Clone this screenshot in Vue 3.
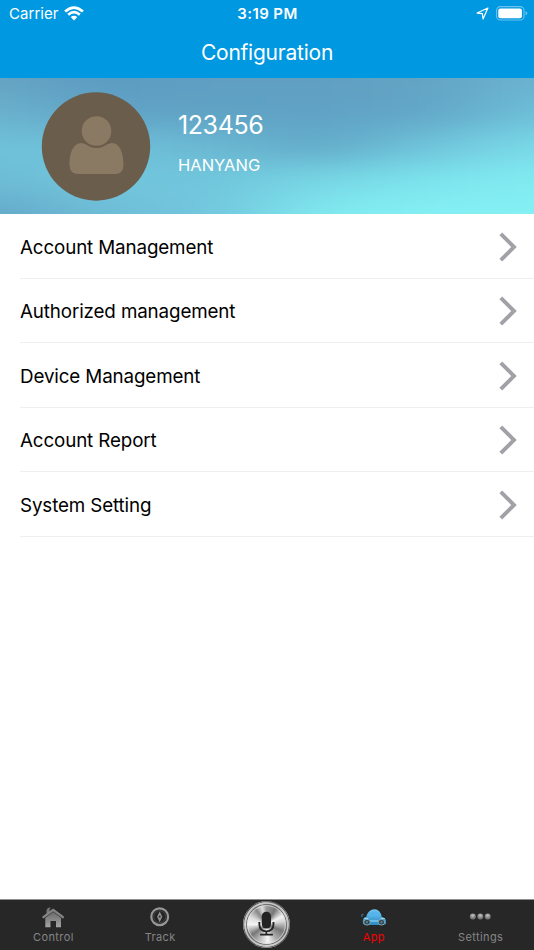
<script setup>
const rows = [
  'Account Management',
  'Authorized management',
  'Device Management',
  'Account Report',
  'System Setting',
]

const sky = [
  ['#65a3c2', '#5c9bc2', '#609fc2', '#609fc2', '#63a4c3', '#6bb2d1'],
  ['#6ab2ce', '#61a2c5', '#5fa2c4', '#60a2c5', '#62a5c7', '#6dbfd8'],
  ['#6fc1da', '#6fc1da', '#6bb8d3', '#62a9c8', '#6fc4da', '#7adae8'],
  ['#6dbcd6', '#72c6dc', '#70c6dc', '#78d7e4', '#7ce4ed', '#81ebf1'],
  ['#64a8c9', '#6fbdd7', '#72c7dd', '#81eaf0', '#84f0f4', '#84f0f4'],
]

const skyCells = sky.flatMap((colors, r) => colors.map((fill, c) => {
  const left = c === 0 ? -200 : c * 106.8 - 53.4
  const right = c === 5 ? 734 : c * 106.8 + 54.4
  const top = r === 0 ? -100 : r * 34 - 17
  const bottom = r === 4 ? 236 : r * 34 + 18
  return { x: left, y: top, width: right - left, height: bottom - top, fill }
}))
</script>

<template>
  <div class="screen">
    <header class="top">
      <div class="status">
        <div class="carrier">
          <span>Carrier</span>
          <svg class="wifi" viewBox="0 0 20 15" width="20" height="15">
            <g fill="none" stroke="#fff" stroke-width="2.7">
              <path d="M1.1 5.5 Q10 -2.4 18.9 5.5" />
              <path d="M4.2 8.7 Q10 3.5 15.8 8.7" />
            </g>
            <path d="M6.7 11.1 Q10 8.4 13.3 11.1 L10 14.4Z" fill="#fff" />
          </svg>
        </div>
        <div class="time">3:19 PM</div>
        <div class="indicators">
          <svg viewBox="0 0 12 12" width="13" height="13">
            <path d="M11 1 L1 5.6 L5.9 6.1 L6.5 11Z" fill="none" stroke="#fff" stroke-width="1.1" stroke-linejoin="round" />
          </svg>
          <svg class="battery" viewBox="0 0 32 15" width="32" height="15">
            <rect x=".6" y=".6" width="27.4" height="13.4" rx="3.8" fill="none" stroke="#fff" stroke-opacity=".42" stroke-width="1.1" />
            <rect x="2.3" y="2.4" width="23.6" height="9.8" rx="2" fill="#fff" />
            <path d="M29.6 5 Q31.2 5.8 31.2 7.3 Q31.2 8.8 29.6 9.6Z" fill="#fff" fill-opacity=".45" />
          </svg>
        </div>
      </div>
      <h1 class="title">Configuration</h1>
    </header>

    <section class="profile">
      <svg class="backdrop" viewBox="0 0 534 136" preserveAspectRatio="none">
        <defs>
          <filter id="soft" filterUnits="userSpaceOnUse" x="-200" y="-100" width="934" height="336" color-interpolation-filters="sRGB">
            <feGaussianBlur stdDeviation="46 13" />
          </filter>
        </defs>
        <g filter="url(#soft)">
          <rect v-for="(cell, i) in skyCells" :key="i" v-bind="cell" />
        </g>
      </svg>
      <svg class="avatar" viewBox="0 0 110 110" width="110" height="110">
        <circle cx="55" cy="54.5" r="54.2" fill="#6b5d4b" />
        <path d="M40.5 51 C31 51 28.5 63.5 28.5 72.5 Q28.5 82 37.5 82 H73.5 Q82.5 82 82.5 72.5 C82.5 63.5 80 51 70.5 51 L55.5 55.5Z" fill="#8a7963" />
        <circle cx="55.5" cy="39" r="17" fill="#6b5d4b" />
        <circle cx="55.5" cy="39" r="14.8" fill="#8a7963" />
      </svg>
      <div class="identity">
        <div class="number">123456</div>
        <div class="name">HANYANG</div>
      </div>
    </section>

    <main class="list">
      <div v-for="row in rows" :key="row" class="row">
        <span class="label">{{ row }}</span>
        <svg viewBox="0 0 18 30" width="18" height="30">
          <path d="M1.8 1.8 L15 15 L1.8 28.2" fill="none" stroke="#a1a1a8" stroke-width="3.9" />
        </svg>
      </div>
    </main>

    <nav class="tabs">
      <div class="tab">
        <svg viewBox="0 0 24 22" width="24" height="22">
          <defs><linearGradient id="gray" x2="0" y2="1"><stop stop-color="#666" /><stop offset="1" stop-color="#a5a5a5" /></linearGradient></defs>
          <path d="M5.5 3.5 Q6.3 .2 9.8 .5 L8.6 2.2 V5.5 L5.5 8Z" fill="#777" />
          <path d="M4.3 11 L12.3 4 L20 11 V20.3 H15 V14 H9.5 V20.3 H4.3Z" fill="url(#gray)" />
          <path d="M2.3 11.5 L12.2 4.6 L22 11.5" fill="none" stroke="#484848" stroke-width="1.1" />
          <path d="M2.3 10.1 L12.2 2.8 L22 10.1" fill="none" stroke="#858585" stroke-width="2.1" stroke-linecap="round" />
        </svg>
        <span>Control</span>
      </div>
      <div class="tab">
        <svg viewBox="0 0 24 22" width="24" height="22">
          <circle cx="11.7" cy="9.7" r="8.4" fill="#242424" stroke="#979797" stroke-width="2.2" />
          <circle cx="11.7" cy="9.7" r="6" fill="none" stroke="#4c4c4c" stroke-width=".8" />
          <path d="M11.7 4.4 L14.3 9.7 L11.7 15.3 L9.1 9.7Z" fill="#929292" />
          <circle cx="11.7" cy="9.7" r="1.1" fill="#333" />
        </svg>
        <span>Track</span>
      </div>
      <div class="tab voice">
        <div class="metal">
          <svg viewBox="0 0 48 48" width="47" height="47">
            <circle cx="24" cy="24" r="23.2" fill="none" stroke="#5c5c5c" stroke-width="1.2" />
            <circle cx="24" cy="24" r="22" fill="none" stroke="#c9c9c9" stroke-width="1.4" />
            <circle cx="24" cy="24" r="20.4" fill="none" stroke="#666" stroke-width="1" />
            <circle cx="24" cy="24" r="19.3" fill="none" stroke="#e6e6e6" stroke-opacity=".65" stroke-width="1" />
            <rect x="19.2" y="11" width="9.4" height="17" rx="4.5" fill="#232323" />
            <path d="M16.7 21.5 V24 Q17 31 23.9 31 Q30.8 31 31.1 24 V21.5 M23.9 31 V34 M17.5 34.3 H30.5" fill="none" stroke="#232323" stroke-width="1.9" />
          </svg>
        </div>
      </div>
      <div class="tab active">
        <svg viewBox="0 0 28 22" width="28" height="22">
          <defs><linearGradient id="blue" x2="0" y2="1"><stop stop-color="#71c7f5" /><stop offset="1" stop-color="#298bc6" /></linearGradient></defs>
          <path d="M3 17 Q1.8 10.7 6.3 9.8 Q8.3 2.2 14.5 2.2 Q20.3 2.2 21.7 9.8 Q27 11 26 17 L22 18 H7Z" fill="url(#blue)" />
          <path d="M8.7 9.2 Q10.3 4.3 14.5 4.3 Q18.5 4.3 19.5 9.2Z" fill="#55b4eb" />
          <path d="M4.2 11.5 H8.3 M20.8 11.5 H24.8 M10 14 H18.5" stroke="#9adaf4" stroke-width="1.2" />
          <ellipse cx="7" cy="15.2" rx="3.3" ry="2.9" fill="#334a56" stroke="#7dabba" />
          <ellipse cx="21.5" cy="15.2" rx="3.3" ry="2.9" fill="#334a56" stroke="#7dabba" />
          <circle cx="7" cy="15.2" r="1.1" fill="#66818c" />
          <circle cx="21.5" cy="15.2" r="1.1" fill="#66818c" />
          <path d="M1.3 8.4 L3.5 7 M1.9 8.5 V10" stroke="#366b87" stroke-width="1.3" />
        </svg>
        <span>App</span>
      </div>
      <div class="tab">
        <svg viewBox="0 0 24 22" width="24" height="22">
          <defs><radialGradient id="dot" cy=".3"><stop stop-color="#c6c6c6" /><stop offset="1" stop-color="#777" /></radialGradient></defs>
          <circle cx="3.8" cy="9.6" r="3" fill="url(#dot)" />
          <circle cx="11.3" cy="9.6" r="3" fill="url(#dot)" />
          <circle cx="18.7" cy="9.6" r="3" fill="url(#dot)" />
        </svg>
        <span>Settings</span>
      </div>
    </nav>
  </div>
</template>

<style>
body { margin: 0; background: #fff; }
</style>

<style scoped>
.screen { width: 534px; height: 950px; display: flex; flex-direction: column; overflow: hidden; background: #fff; font-family: Inter, "Liberation Sans", sans-serif; }
.top { height: 77.5px; flex: none; background: #0098e1; color: #fff; }
.status { height: 28px; display: grid; grid-template-columns: 1fr auto 1fr; align-items: center; box-sizing: border-box; padding: 0 7px 0 9px; font-size: 15px; line-height: 28px; }
.carrier { display: flex; align-items: center; gap: 5px; letter-spacing: .05px; }
.wifi { margin-top: -2px; }
.time { font-weight: 600; letter-spacing: .4px; margin-right: 1px; }
.indicators { display: flex; align-items: center; justify-content: flex-end; gap: 7px; margin: -1px -1px 0 0; }
.title { margin: 0; height: 49px; line-height: 50px; text-align: center; font-size: 21px; font-weight: 400; letter-spacing: -.23px; }
.profile { height: 136.5px; flex: none; position: relative; display: flex; align-items: flex-start; box-sizing: border-box; padding: 14px 0 0 41px; overflow: hidden; color: #fff; }
.backdrop { position: absolute; inset: 0; width: 100%; height: 100%; }
.avatar { position: relative; flex: none; }
.identity { position: relative; margin: 16px 0 0 27px; }
.number { font-size: 25px; line-height: 34px; letter-spacing: -.4px; }
.name { font-size: 16.5px; line-height: 24px; margin-top: 11px; letter-spacing: 0; }
.list { flex: 1; }
.row { height: 64.5px; box-sizing: border-box; margin-left: 20px; padding: 2px 17px 0 0; display: flex; align-items: center; justify-content: space-between; border-bottom: 1px solid #efefef; font-size: 18.8px; letter-spacing: -.13px; color: #000; }
.label { padding-top: 1px; }
.tabs { height: 51px; flex: none; display: grid; grid-template-columns: repeat(5, 1fr); box-sizing: border-box; border-top: 1px solid #8d9090; background: #272727; color: #858585; }
.tab { display: flex; flex-direction: column; align-items: center; padding-top: 7px; font-size: 11px; line-height: 17px; letter-spacing: .4px; }
.active { color: #f50000; }
.voice { padding-top: .5px; }
.metal { width: 47px; height: 47px; border-radius: 50%; background: conic-gradient(#999 0deg, #777 30deg, #f2f2f2 62deg, #d4d4d4 80deg, #777 112deg, #aaa 145deg, #f5f5f5 175deg, #bbb 205deg, #777 235deg, #f4f4f4 270deg, #ddd 295deg, #888 325deg, #ddd 345deg, #999 360deg); }
</style>
